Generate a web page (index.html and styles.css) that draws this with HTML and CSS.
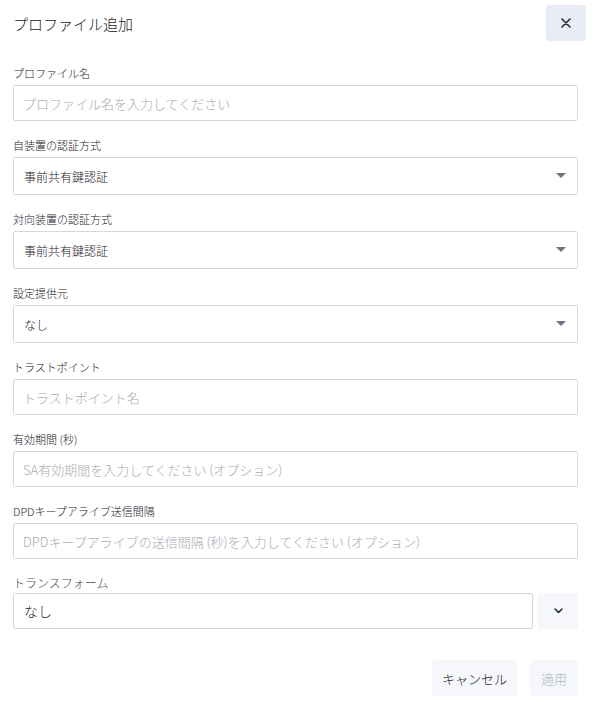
FILE: index.html
```html
<!DOCTYPE html>
<html lang="ja">
<head>
<meta charset="utf-8">
<title>プロファイル追加</title>
<link rel="stylesheet" href="styles.css">
</head>
<body>
<div class="dialog">
  <header class="head">
    <h1 class="title">プロファイル追加</h1>
    <button class="close" type="button" aria-label="閉じる">
      <svg width="10" height="10" viewBox="0 0 10 10"><path d="M1 1L9 9M9 1L1 9" stroke="#1f2a44" stroke-width="1.6" stroke-linecap="round"/></svg>
    </button>
  </header>

  <form class="form">
    <div class="field">
      <label class="label">プロファイル名</label>
      <input class="input" type="text" placeholder="プロファイル名を入力してください">
    </div>

    <div class="field">
      <label class="label">自装置の認証方式</label>
      <div class="select">
        <span class="value">事前共有鍵認証</span>
        <svg class="caret" width="10" height="6" viewBox="0 0 10 6"><path d="M0 0H10L5 5Z" fill="#6b7385"/></svg>
      </div>
    </div>

    <div class="field">
      <label class="label">対向装置の認証方式</label>
      <div class="select">
        <span class="value">事前共有鍵認証</span>
        <svg class="caret" width="10" height="6" viewBox="0 0 10 6"><path d="M0 0H10L5 5Z" fill="#6b7385"/></svg>
      </div>
    </div>

    <div class="field">
      <label class="label">設定提供元</label>
      <div class="select">
        <span class="value">なし</span>
        <svg class="caret" width="10" height="6" viewBox="0 0 10 6"><path d="M0 0H10L5 5Z" fill="#6b7385"/></svg>
      </div>
    </div>

    <div class="field">
      <label class="label">トラストポイント</label>
      <input class="input" type="text" placeholder="トラストポイント名">
    </div>

    <div class="field">
      <label class="label">有効期間 (秒)</label>
      <input class="input" type="text" placeholder="SA有効期間を入力してください (オプション)">
    </div>

    <div class="field">
      <label class="label">DPDキープアライブ送信間隔</label>
      <input class="input" type="text" placeholder="DPDキープアライブの送信間隔 (秒)を入力してください (オプション)">
    </div>

    <div class="field field-last">
      <label class="label label-muted">トランスフォーム</label>
      <div class="combo">
        <input class="input input-lg" type="text" value="なし">
        <button class="combo-btn" type="button" aria-label="開く">
          <svg width="9" height="6" viewBox="0 0 9 6"><path d="M1 1L4.5 4.5L8 1" fill="none" stroke="#1f2a44" stroke-width="1.6" stroke-linecap="round" stroke-linejoin="round"/></svg>
        </button>
      </div>
    </div>

    <footer class="actions">
      <button class="btn" type="button">キャンセル</button>
      <button class="btn btn-disabled" type="button" disabled>適用</button>
    </footer>
  </form>
</div>
</body>
</html>
```

FILE: styles.css
```css
* { box-sizing: border-box; }

html, body {
  margin: 0;
  padding: 0;
  background: #ffffff;
}

body {
  font-family: "Noto Sans CJK JP", Roboto, "Noto Sans", sans-serif;
  font-weight: 300;
  color: #1d2129;
}

.dialog {
  width: 593px;
  padding: 5px 7px 0 13px;
}

.head {
  display: flex;
  align-items: center;
  justify-content: space-between;
  height: 36px;
}

.title {
  margin: 0;
  font-size: 15px;
  font-weight: 300;
  color: #1d2129;
}

.close {
  width: 40px;
  height: 36px;
  border: 0;
  border-radius: 4px;
  background: #e8ecf4;
  display: flex;
  align-items: center;
  justify-content: center;
  padding: 0;
  cursor: pointer;
}

.form {
  margin-top: 24px;
  padding-right: 8px;
}

.field {
  margin-bottom: 16px;
}

.label {
  display: block;
  font-size: 11px;
  line-height: 16px;
  margin-bottom: 4px;
  color: #1d2129;
  font-weight: 300;
}

.label-muted {
  color: #4a4f57;
  font-size: 12px;
  margin-bottom: 2px;
}

.input {
  display: block;
  width: 100%;
  height: 36px;
  border: 1px solid #d3d7de;
  border-radius: 2px;
  padding: 0 9px;
  font-family: inherit;
  font-weight: 300;
  font-size: 13px;
  color: #1d2129;
  background: #fff;
  outline: none;
}

.input::placeholder {
  color: #a9adb4;
}

.input-lg {
  font-size: 14px;
  padding: 0 10px;
}

.select {
  display: flex;
  align-items: center;
  justify-content: space-between;
  height: 38px;
  border: 1px solid #d3d7de;
  border-radius: 2px;
  padding: 0 11px 0 10px;
}

.value {
  font-size: 12px;
  font-weight: 300;
  color: #1d2129;
}

.caret {
  display: block;
}

.combo {
  display: flex;
  gap: 5px;
}

.combo .input {
  flex: 1;
}

.combo-btn {
  width: 40px;
  height: 36px;
  border: 0;
  border-radius: 4px;
  background: #f5f7fa;
  display: flex;
  align-items: center;
  justify-content: center;
  padding: 0;
}

.actions {
  display: flex;
  justify-content: flex-end;
  gap: 13px;
  margin-top: 31px;
}

.btn {
  height: 36px;
  padding: 0 10px;
  border: 0;
  border-radius: 4px;
  background: #f5f7fa;
  font-family: inherit;
  font-weight: 300;
  font-size: 13px;
  color: #1d2129;
}

.btn-disabled {
  color: #b4b8bf;
  padding: 0 11px;
}
```
